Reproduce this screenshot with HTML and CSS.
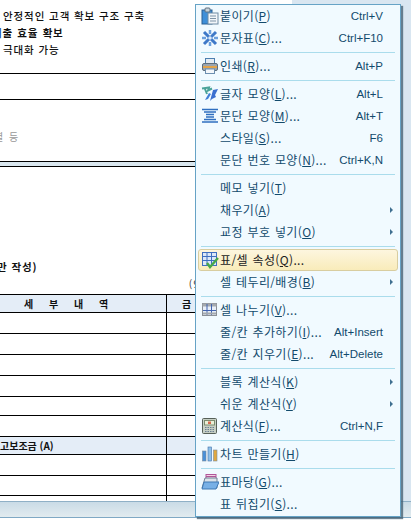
FILE: index.html
```html
<!DOCTYPE html>
<html lang="ko">
<head>
<meta charset="utf-8">
<title>표/셀 메뉴</title>
<link rel="stylesheet" href="styles.css">
</head>
<body>
<div class="app">
  <div class="workspace">
    <div class="page">
      <div class="notes">
        <p class="note">안정적인 고객 확보 구조 구축</p>
        <p class="note clip"><span class="cut">배</span>출 효율 확보</p>
        <p class="note">극대화 가능</p>
      </div>
      <div class="rule r26"></div>
      <div class="rule r62"><span class="hint">별 등</span></div>
      <div class="rule band"></div>
      <div class="plain">
        <span class="title">만 작성)</span>
        <span class="unit">( 9</span>
      </div>
      <div class="trow head h18"><div class="c1 spaced">세 부 내 역</div><div class="c2">금</div></div>
      <div class="trow h21"><div class="c1"></div><div class="c2"></div></div>
      <div class="trow h21"><div class="c1"></div><div class="c2"></div></div>
      <div class="trow h21"><div class="c1"></div><div class="c2"></div></div>
      <div class="trow h21"><div class="c1"></div><div class="c2"></div></div>
      <div class="trow h19"><div class="c1"></div><div class="c2"></div></div>
      <div class="trow h21"><div class="c1"></div><div class="c2"></div></div>
      <div class="trow head h18"><div class="c1 sub">고보조금 (A)</div><div class="c2"></div></div>
      <div class="trow h21"><div class="c1"></div><div class="c2"></div></div>
      <div class="trow h20"><div class="c1"></div><div class="c2"></div></div>
      <div class="trow last"><div class="c1"></div><div class="c2"></div></div>
    </div>
  </div>
  <div class="statusbar"></div>
</div>

<div class="menu">
  <div class="item"><span class="ico"><svg viewBox="0 0 18 18"><rect x="1" y="3" width="10" height="14" fill="#3f8fd8" stroke="#2a5f94"/><rect x="4" y="1" width="5" height="4" rx="1" fill="#c8d3da" stroke="#5c6f7e"/><rect x="7" y="6" width="10" height="11" fill="#f2f6fa" stroke="#6f8ba3"/><path d="M9 9h6M9 11.500h6M9 14h6" stroke="#7d93a6"/></svg></span><span class="lab">붙이기(<u>P</u>)</span><span class="key">Ctrl+V</span><span class="sub-mark"></span></div>
  <div class="item"><span class="ico"><svg viewBox="0 0 18 18"><path d="M3 3l12 12M15 3L3 15" stroke="#3d78c8" stroke-width="3"/><path d="M9 1v4M9 13v4M1 9h4M13 9h4" stroke="#6ba0de" stroke-width="2.500"/><circle cx="9" cy="9" r="1.800" fill="#dcebfa"/></svg></span><span class="lab">문자표(<u>C</u>)...</span><span class="key">Ctrl+F10</span><span class="sub-mark"></span></div>
  <div class="sep"></div>
  <div class="item"><span class="ico"><svg viewBox="0 0 18 18"><rect x="4.500" y="1.500" width="9" height="6" fill="#e4ebf2" stroke="#4d7fb0"/><rect x="1.500" y="6.500" width="15" height="7" rx="1.500" fill="#9aa5b0" stroke="#5f6e7c"/><rect x="2" y="9" width="14" height="2" fill="#e2a34a"/><rect x="4.500" y="12" width="9" height="4.500" fill="#f4f7fa" stroke="#6d8fb0"/></svg></span><span class="lab">인쇄(<u>R</u>)...</span><span class="key">Alt+P</span><span class="sub-mark"></span></div>
  <div class="sep"></div>
  <div class="item"><span class="ico"><svg viewBox="0 0 18 18"><path d="M1 3.500l7-1-1 3 4-2M4 4l2 5" fill="none" stroke="#4aa39a" stroke-width="2"/><path d="M4 15l4-7 2 1-3 5z" fill="#3f7fd8"/><path d="M9 16l3-11 5-1-3 6 1 2-4 2z" fill="#3a6fd0"/></svg></span><span class="lab">글자 모양(<u>L</u>)...</span><span class="key">Alt+L</span><span class="sub-mark"></span></div>
  <div class="item"><span class="ico"><svg viewBox="0 0 18 18"><path d="M1 2.500h16M3 5h12M5 7.500h8M5 10h8M3 12.500h12M1 15h16" stroke="#2f6fc0" stroke-width="1.400"/></svg></span><span class="lab">문단 모양(<u>M</u>)...</span><span class="key">Alt+T</span><span class="sub-mark"></span></div>
  <div class="item"><span class="ico"></span><span class="lab">스타일(<u>S</u>)...</span><span class="key">F6</span><span class="sub-mark"></span></div>
  <div class="item"><span class="ico"></span><span class="lab">문단 번호 모양(<u>N</u>)...</span><span class="key">Ctrl+K,N</span><span class="sub-mark"></span></div>
  <div class="sep"></div>
  <div class="item"><span class="ico"></span><span class="lab">메모 넣기(<u>T</u>)</span><span class="sub-mark"></span></div>
  <div class="item"><span class="ico"></span><span class="lab">채우기(<u>A</u>)</span><span class="sub-mark on"></span></div>
  <div class="item"><span class="ico"></span><span class="lab">교정 부호 넣기(<u>O</u>)</span><span class="sub-mark on"></span></div>
  <div class="sep"></div>
  <div class="item active"><span class="ico"><svg viewBox="0 0 18 18"><rect x="1.500" y="1.500" width="14" height="13" fill="#dce8f8" stroke="#3f6fc0"/><path d="M1.500 5.500h14M1.500 9.500h14M6 1.500v13M10.500 1.500v13" stroke="#3f6fc0"/><path d="M6 12l3 4 8-9" fill="none" stroke="#48a848" stroke-width="2.400"/></svg></span><span class="lab">표/셀 속성(<u>Q</u>)...</span><span class="sub-mark"></span></div>
  <div class="item"><span class="ico"></span><span class="lab">셀 테두리/배경(<u>B</u>)</span><span class="sub-mark on"></span></div>
  <div class="sep"></div>
  <div class="item"><span class="ico"><svg viewBox="0 0 18 18"><rect x="1.500" y="2.500" width="14" height="12" fill="#e8eff8" stroke="#8a8f96"/><rect x="1.500" y="2.500" width="14" height="3" fill="#a4a9ae"/><path d="M6 3v11M10.500 3v11M2 9.500h13" stroke="#3f62b0"/><path d="M2 12.500h13" stroke="#a4a9ae" stroke-width="2"/></svg></span><span class="lab">셀 나누기(<u>V</u>)...</span><span class="sub-mark"></span></div>
  <div class="item"><span class="ico"></span><span class="lab">줄/칸 추가하기(<u>I</u>)...</span><span class="key">Alt+Insert</span><span class="sub-mark"></span></div>
  <div class="item"><span class="ico"></span><span class="lab">줄/칸 지우기(<u>E</u>)...</span><span class="key">Alt+Delete</span><span class="sub-mark"></span></div>
  <div class="sep"></div>
  <div class="item"><span class="ico"></span><span class="lab">블록 계산식(<u>K</u>)</span><span class="sub-mark on"></span></div>
  <div class="item"><span class="ico"></span><span class="lab">쉬운 계산식(<u>Y</u>)</span><span class="sub-mark on"></span></div>
  <div class="item"><span class="ico"><svg viewBox="0 0 18 18"><rect x="1.500" y="1.500" width="14" height="15" rx="1" fill="#c6cfc4" stroke="#566058"/><rect x="3.500" y="3.500" width="10" height="4.500" fill="#e8f0d8" stroke="#7c8c70"/><rect x="7" y="4.500" width="3" height="2.500" fill="#d86a50"/><path d="M4 10.500h10M4 12.500h10M4 14.500h10" stroke="#6b7f92" stroke-dasharray="1.500 1"/></svg></span><span class="lab">계산식(<u>F</u>)...</span><span class="key">Ctrl+N,F</span><span class="sub-mark"></span></div>
  <div class="sep"></div>
  <div class="item"><span class="ico"><svg viewBox="0 0 18 18"><rect x="1.500" y="6" width="3.500" height="10" fill="#4a90d8" stroke="#7c8c9c" stroke-width=".6"/><rect x="7" y="2" width="3.500" height="14" fill="#8fc0e8" stroke="#3f6fa8" stroke-width=".6"/><rect x="12.500" y="5" width="3.500" height="11" fill="#e0a840" stroke="#7c8c9c" stroke-width=".6"/></svg></span><span class="lab">차트 만들기(<u>H</u>)</span><span class="sub-mark"></span></div>
  <div class="sep"></div>
  <div class="item"><span class="ico"><svg viewBox="0 0 18 18"><rect x="5" y="1.500" width="10" height="6" fill="#f3d5e4" stroke="#b0569a"/><path d="M5 3.500h10" stroke="#b0569a"/><path d="M4 5h12v10H1z" fill="#dbe3ea" stroke="#6f8094"/><path d="M3 9h15l-3 7H1z" fill="#78b0e6" stroke="#3f78b4"/></svg></span><span class="lab">표마당(<u>G</u>)...</span><span class="sub-mark"></span></div>
  <div class="item"><span class="ico"></span><span class="lab">표 뒤집기(<u>S</u>)...</span><span class="sub-mark"></span></div>
</div>
</body>
</html>
```
FILE: styles.css
```css
* { box-sizing: border-box; }
html, body { margin: 0; padding: 0; }
body {
  width: 411px;
  height: 520px;
  overflow: hidden;
  background: #fff;
  font-family: "Noto Sans CJK KR", "Noto Sans", sans-serif;
  position: relative;
}
.app { height: 518px; display: flex; flex-direction: column; border-bottom: 1px solid #7fa8c4; }
.workspace { height: 501px; background: #d9e6f1; overflow: hidden; }
.page { width: 292px; height: 501px; background: #fff; font-size: 10px; color: #111; overflow: hidden; }
.notes { height: 73px; padding-top: 7px; }
.note { margin: 0; height: 17px; line-height: 17px; padding-left: 3px; font-size: 10.5px; letter-spacing: 0.9px; font-weight: 500; white-space: nowrap; }
.note.clip { padding-left: 0; font-weight: 700; word-spacing: 1px; letter-spacing: .7px; }
.cut { margin-left: -8px; color: #234a9a; }
.rule { border-top: 1px solid #000; }
.r26 { height: 26px; }
.r62 { height: 62px; padding-top: 30px; overflow: hidden; }
.hint { color: #999; font-size: 10px; line-height: 14px; display: block; margin-left: -6px; word-spacing: 3px; }
.band { height: 6px; background: #d9e6ee; border-bottom: 1px solid #000; }
.plain { height: 127px; display: flex; justify-content: space-between; align-items: flex-end; }
.title { font-weight: 700; font-size: 10.5px; line-height: 14px; padding-bottom: 20px; letter-spacing: .9px; margin-left: -3px; }
.unit { font-size: 10px; line-height: 14px; padding: 0 93px 3px 0; color: #333; word-spacing: -1.5px; }
.trow { display: flex; border-top: 1px solid #000; }
.h18 { height: 18px; }
.h19 { height: 19px; }
.h20 { height: 20px; }
.h21 { height: 21px; }
.last { height: 6px; }
.head { background: #e4edf7; }
.c1 { width: 167px; border-right: 1px solid #000; font-weight: 700; line-height: 17px; overflow: hidden; white-space: nowrap; }
.c2 { width: 71px; padding-left: 15px; font-weight: 700; line-height: 17px; border-right: 1px solid #000; }
.spaced { padding-left: 24px; word-spacing: 13px; }
.statusbar { height: 16px; border-top: 1px solid #8fb0c6; background: linear-gradient(#c9dbe6, #e2ebef); }

.menu {
  position: absolute;
  left: 195px;
  top: 4px;
  width: 206px;
  height: 513px;
  padding: 0 1px;
  background: #f1faff;
  border: 1px solid #66a3c6;
  box-shadow: 2px 2px 1px rgba(60, 90, 110, .75);
  color: #124a6c;
  font-size: 12px;
  display: flex;
  flex-direction: column;
}
.item {
  height: 22px;
  flex: none;
  display: flex;
  align-items: center;
  padding-right: 6px;
  white-space: nowrap;
  line-height: 22px;
}
.ico { width: 23px; height: 18px; padding-left: 4px; flex: none; display: block; }
.ico svg { width: 18px; height: 18px; display: block; }
.lab { flex: 1; letter-spacing: .35px; word-spacing: 1px; }
.key { flex: none; font-family: "Liberation Sans", sans-serif; font-size: 11.5px; }
.sub-mark { width: 10px; flex: none; display: flex; justify-content: flex-end; }
.sub-mark.on::after {
  content: "";
  border-left: 3px solid #3f6f90;
  border-top: 3px solid transparent;
  border-bottom: 3px solid transparent;
}
.sep { height: 6px; flex: none; display: flex; align-items: center; margin: 0 4px; }
.sep::after { content: ""; display: block; width: 100%; height: 1px; background: #aadcec; }
.item.active {
  margin: 0 1px;
  padding-right: 4px;
  border: 1px solid #d8cda0;
  border-radius: 3px;
  background: linear-gradient(#fdf6df, #f9ecba);
  color: #222;
}
.item.active .ico { width: 21px; padding-left: 2px; }
```
